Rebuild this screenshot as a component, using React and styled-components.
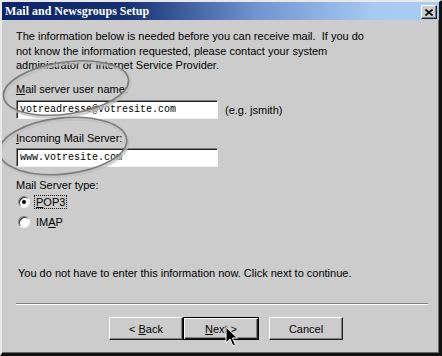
import React from 'react'
import styled, { createGlobalStyle } from 'styled-components'

const GlobalStyle = createGlobalStyle`
  html, body {
    margin: 0;
    padding: 0;
    background: #cccccc;
  }
  body {
    font-family: "Liberation Sans", Arial, sans-serif;
  }
`

const Window = styled.div`
  position: relative;
  box-sizing: border-box;
  width: 442px;
  height: 356px;
  background: #cccccc;
  border-style: solid;
  border-width: 2px 3px 3px 2px;
  border-color: #e8e8e8 #111111 #111111 #e8e8e8;
  box-shadow: inset -1px -1px 0 #6a6a6a;
  font-size: 11px;
  color: #000;
  overflow: hidden;
`

const TitleBar = styled.div`
  display: flex;
  align-items: flex-start;
  justify-content: space-between;
  height: 18px;
  background: linear-gradient(90deg, #0a246a 0%, #143072 28%, #6f94d0 58%, #a6caf0 85%, #a8ccf2 100%);
`

const Title = styled.div`
  padding-left: 3px;
  font-family: "Liberation Serif", "Times New Roman", serif;
  font-weight: bold;
  font-size: 12px;
  line-height: 18px;
  color: #ffffff;
`

const CloseButton = styled.div`
  box-sizing: border-box;
  width: 16px;
  height: 14px;
  margin: 3px 2px 0 0;
  display: flex;
  align-items: center;
  justify-content: center;
  background: #cccccc;
  border-style: solid;
  border-width: 1px;
  border-color: #ffffff #202020 #202020 #ffffff;
  box-shadow: inset -1px -1px 0 #808080;
`

const Content = styled.div`
  padding: 0 11px 0 14px;
`

const Intro = styled.p`
  margin: 9px 0 0;
  line-height: 14.5px;
  width: 360px;
`

const Label = styled.div`
  line-height: 14px;
  margin-top: ${p => p.$gap}px;
`

const Key = styled.span`
  text-decoration: underline;
  text-underline-offset: 1px;
`

const FieldRow = styled.div`
  display: flex;
  align-items: center;
  gap: 7px;
  margin-top: ${p => p.$gap}px;
`

const TextBox = styled.div`
  box-sizing: border-box;
  width: 202px;
  height: 19px;
  background: #ffffff;
  border-style: solid;
  border-width: 1px;
  border-color: #808080 #f4f4f4 #f4f4f4 #808080;
  box-shadow: inset 1px 1px 0 #202020;
  padding: 2px 0 0 3px;
  font-family: "Liberation Mono", "Courier New", monospace;
  font-size: 10px;
  line-height: 14px;
  white-space: nowrap;
`

const Hint = styled.span`
  line-height: 14px;
`

const RadioRow = styled.div`
  display: flex;
  align-items: center;
  gap: 4px;
  margin-top: ${p => p.$gap}px;
  padding-left: 2px;
  line-height: 14px;
`

const RadioDot = styled.span`
  position: relative;
  box-sizing: border-box;
  width: 12px;
  height: 12px;
  border-radius: 50%;
  background: #ffffff;
  border: 1px solid;
  border-color: #808080 #f4f4f4 #f4f4f4 #808080;
  box-shadow: inset 1px 1px 0 #303030;

  &::after {
    content: '';
    display: ${p => (p.$checked ? 'block' : 'none')};
    position: absolute;
    left: 3px;
    top: 3px;
    width: 4px;
    height: 4px;
    border-radius: 50%;
    background: #000;
  }
`

const RadioText = styled.span`
  padding: 0 1px;
  border: 1px ${p => (p.$focus ? 'dotted #000' : 'solid transparent')};
  line-height: 12px;
`

const Note = styled.div`
  margin-top: 37px;
  padding-left: 2px;
  line-height: 14px;
`

const Separator = styled.div`
  margin-top: 23px;
  height: 1px;
  background: #808080;
  border-bottom: 1px solid #ffffff;
`

const ButtonRow = styled.div`
  display: flex;
  margin: 12px 0 0 93px;
`

const Button = styled.div`
  box-sizing: border-box;
  width: ${p => (p.$default ? 76 : 74)}px;
  height: 23px;
  margin-left: ${p => p.$gap || 0}px;
  display: flex;
  align-items: center;
  justify-content: center;
  background: #cccccc;
  border: 1px solid;
  border-color: ${p => (p.$default ? '#000' : '#ffffff #202020 #202020 #ffffff')};
  box-shadow: ${p =>
    p.$default
      ? 'inset 1px 1px 0 #ffffff, inset -1px -1px 0 #202020, inset -2px -2px 0 #808080'
      : 'inset -1px -1px 0 #808080'};
  font-size: 11px;
  white-space: pre;
`

const Overlay = styled.svg`
  position: absolute;
  left: -2px;
  top: -2px;
  pointer-events: none;
`

const Pointer = styled.svg`
  position: absolute;
  left: 223px;
  top: 324px;
  pointer-events: none;
`

const Ring = ({ cx, cy, rx, ry, rot }) => (
  <g transform={`rotate(${rot} ${cx} ${cy})`}>
    <ellipse cx={cx + 1} cy={cy + 2} rx={rx} ry={ry} fill="none" stroke="#bdbdbd" strokeWidth="3" opacity="0.7" />
    <ellipse cx={cx} cy={cy} rx={rx} ry={ry} fill="none" stroke="#7d7d7d" strokeWidth="1.6" />
  </g>
)

export default function App() {
  return (
    <>
      <GlobalStyle />
      <Window>
        <TitleBar>
          <Title>Mail and Newsgroups Setup</Title>
          <CloseButton>
            <svg width="8" height="7" viewBox="0 0 8 7">
              <path d="M0.5 0.5 L7.5 6.5 M7.5 0.5 L0.5 6.5" stroke="#000" strokeWidth="1.6" />
            </svg>
          </CloseButton>
        </TitleBar>

        <Content>
          <Intro>
            The information below is needed before you can receive mail.&nbsp; If you do not know the
            information requested, please contact your system administrator or Internet Service Provider.
          </Intro>

          <Label $gap={9.5}><Key>M</Key>ail server user name:</Label>
          <FieldRow $gap={4}>
            <TextBox>votreadresse@votresite.com</TextBox>
            <Hint>(e.g. jsmith)</Hint>
          </FieldRow>

          <Label $gap={12}><Key>I</Key>ncoming Mail Server:</Label>
          <FieldRow $gap={3}>
            <TextBox>www.votresite.com</TextBox>
          </FieldRow>

          <Label $gap={11}>Mail Server type:</Label>
          <RadioRow $gap={3}>
            <RadioDot $checked />
            <RadioText $focus><Key>P</Key>OP3</RadioText>
          </RadioRow>
          <RadioRow $gap={6}>
            <RadioDot />
            <RadioText>IM<Key>A</Key>P</RadioText>
          </RadioRow>

          <Note>You do not have to enter this information now. Click next to continue.</Note>

          <Separator />

          <ButtonRow>
            <Button><span>&lt; <Key>B</Key>ack</span></Button>
            <Button $default><span><Key>N</Key>ext &gt;</span></Button>
            <Button $gap={10}>Cancel</Button>
          </ButtonRow>
        </Content>

        <Overlay width="442" height="356" viewBox="0 0 442 356">
          <Ring cx={66} cy={88} rx={63} ry={26} rot={-8} />
          <Ring cx={63} cy={146} rx={64} ry={28} rot={-6} />
        </Overlay>

        <Pointer width="14" height="22" viewBox="0 0 14 22">
          <path d="M1 1 L1 17 L5 13 L8 20 L10.5 19 L7.5 12 L12.5 12 Z" fill="#000" stroke="#fff" strokeWidth="1" strokeLinejoin="round" />
        </Pointer>
      </Window>
    </>
  )
}
